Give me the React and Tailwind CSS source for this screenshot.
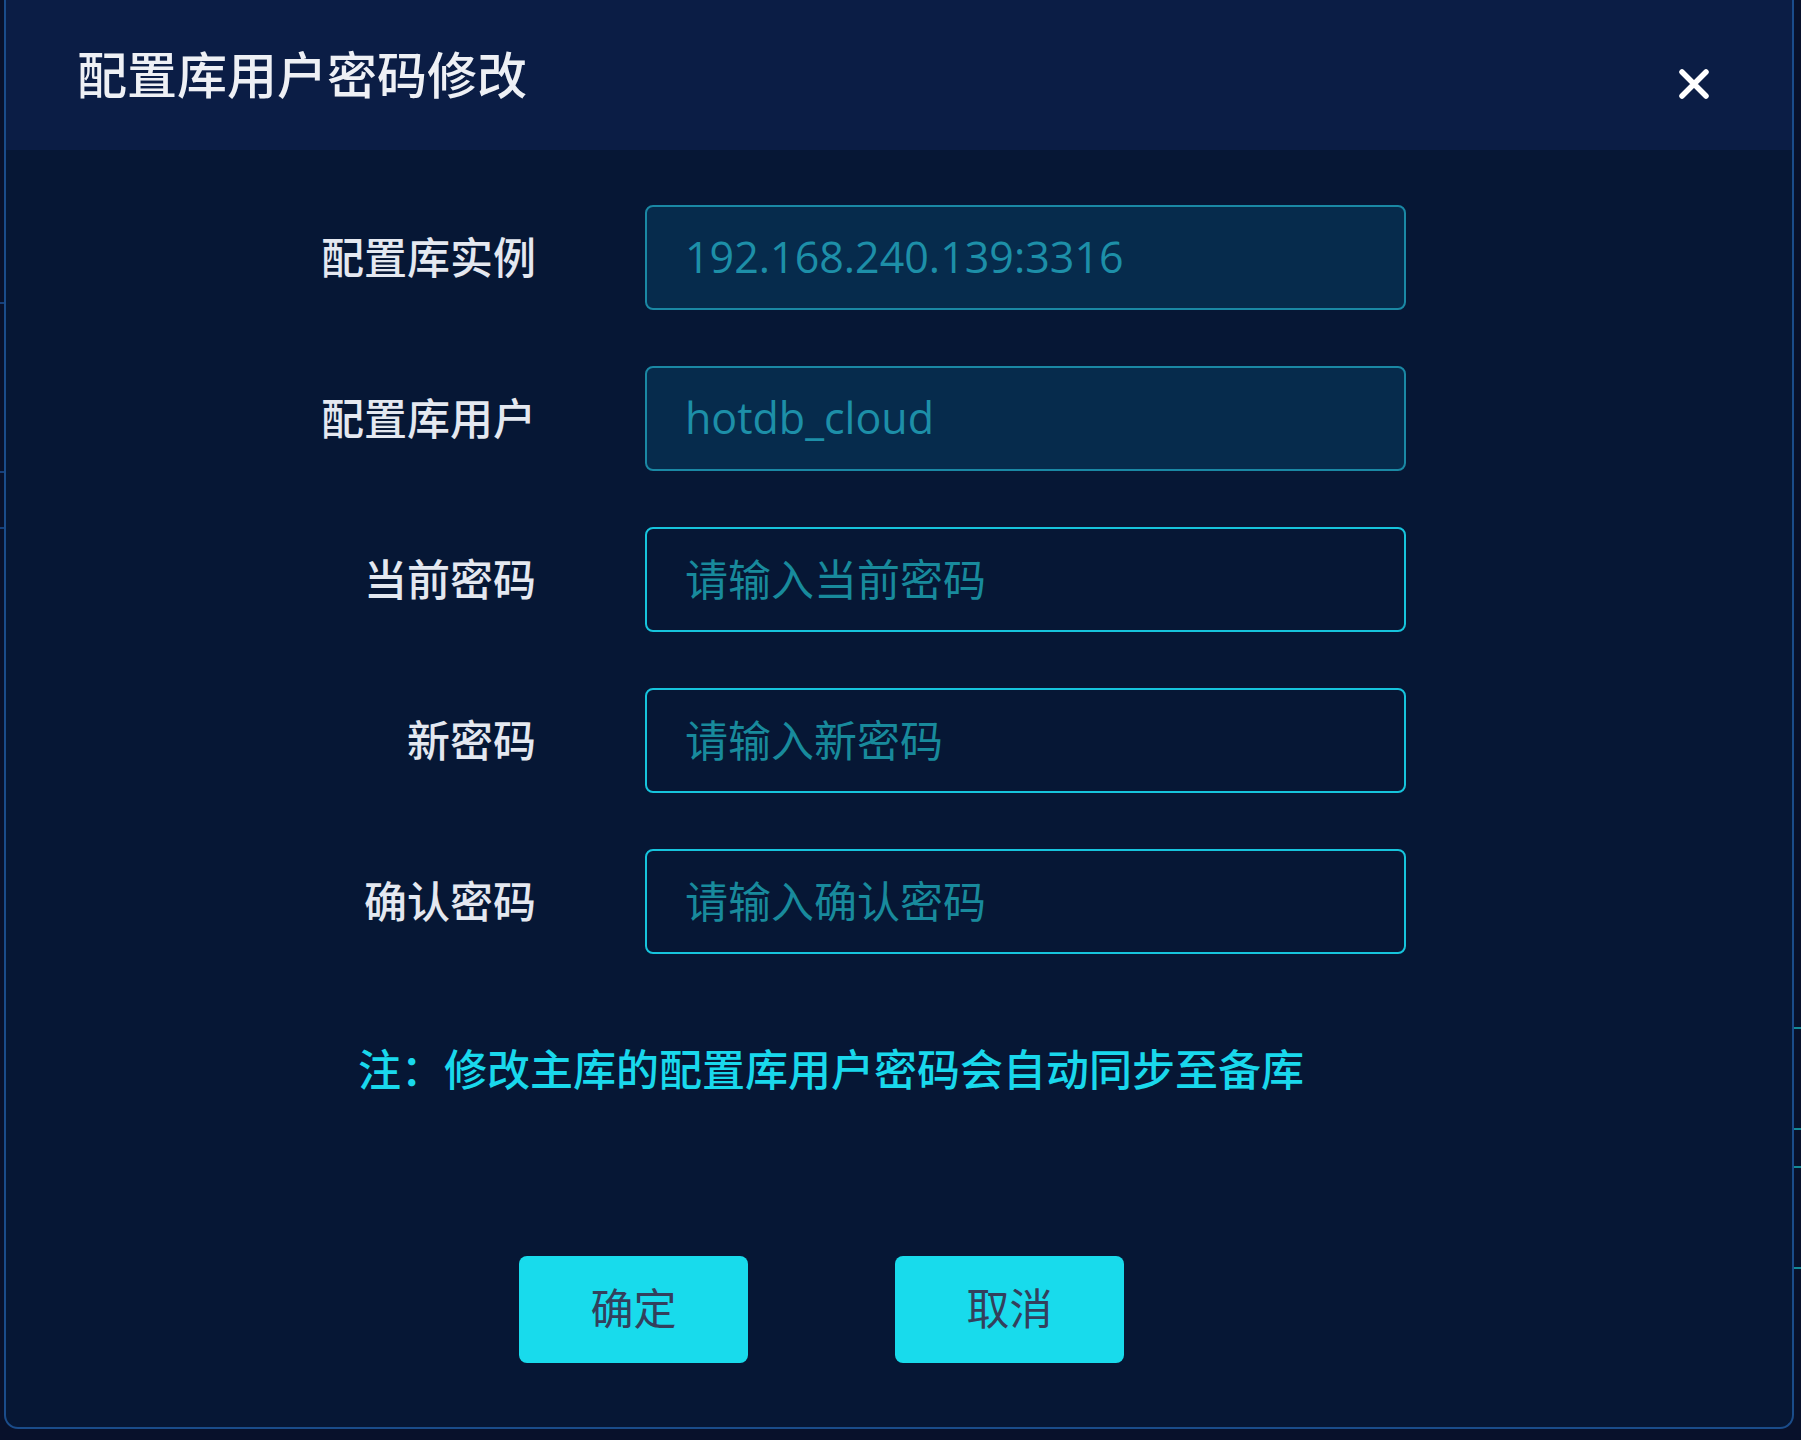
import React from "react";

const font = { fontFamily: '"Open Sans", "Noto Sans CJK SC", sans-serif' };

function Row({ label, children }) {
  return (
    <div className="flex items-center">
      <div className="w-[530px] shrink-0 text-right text-[43px] font-medium leading-none text-[#e4e8f0]">
        {label}
      </div>
      <div className="ml-[109px] w-[761px]">{children}</div>
    </div>
  );
}

function DisabledInput({ value }) {
  return (
    <div className="flex h-[105px] items-center rounded-[8px] border-2 border-[#1a88a4] bg-[#062b4c] pl-[38px] text-[43px] text-[#1d8fa8]">
      {value}
    </div>
  );
}

function PwInput({ placeholder }) {
  return (
    <input
      type="password"
      placeholder={placeholder}
      className="block h-[105px] w-full rounded-[8px] border-2 border-[#16c4dc] bg-[#061735] pl-[38px] text-[43px] text-[#1d8fa0] outline-none placeholder:text-[#188a9c]"
      style={font}
    />
  );
}

export default function App() {
  return (
    <div className="relative h-[1440px] w-full overflow-hidden bg-[#08112b]" style={font}>
      {/* background marks peeking around dialog */}
      <div className="absolute right-0 top-[1027px] h-[2px] w-[7px] bg-[#138a96]" />
      <div className="absolute right-0 top-[1128px] h-[2px] w-[7px] bg-[#138a96]" />
      <div className="absolute right-0 top-[1166px] h-[2px] w-[7px] bg-[#138a96]" />
      <div className="absolute right-0 top-[1267px] h-[2px] w-[7px] bg-[#138a96]" />
      <div className="absolute left-0 top-[302px] h-[2px] w-[4px] bg-[#17407a]" />
      <div className="absolute left-0 top-[471px] h-[2px] w-[4px] bg-[#17407a]" />
      <div className="absolute left-0 top-[527px] h-[2px] w-[4px] bg-[#17407a]" />

      <div className="ml-[4px] flex h-[1429px] w-[1790px] flex-col overflow-hidden rounded-b-[14px] border-2 border-t-0 border-[#1a4c8a] bg-[#061735]">
        {/* header */}
        <div className="flex h-[150px] shrink-0 items-center justify-between bg-[#0b1d45] pl-[71px] pr-[82px]">
          <div className="-mt-[1px] text-[50px] font-medium leading-none text-[#eef0f5]">
            配置库用户密码修改
          </div>
          <svg width="32" height="32" viewBox="0 0 32 32" className="mt-[18px]">
            <path d="M4 4 L28 28 M28 4 L4 28" stroke="#ffffff" strokeWidth="5.5" strokeLinecap="round" />
          </svg>
        </div>

        {/* body */}
        <div className="flex flex-col gap-[56px] pt-[55px]">
          <Row label="配置库实例">
            <DisabledInput value="192.168.240.139:3316" />
          </Row>
          <Row label="配置库用户">
            <DisabledInput value="hotdb_cloud" />
          </Row>
          <Row label="当前密码">
            <PwInput placeholder="请输入当前密码" />
          </Row>
          <Row label="新密码">
            <PwInput placeholder="请输入新密码" />
          </Row>
          <Row label="确认密码">
            <PwInput placeholder="请输入确认密码" />
          </Row>
        </div>

        <div className="ml-[352px] mt-[88px] text-[43px] font-medium leading-[56px] text-[#19d8ec]">
          注：修改主库的配置库用户密码会自动同步至备库
        </div>

        <div className="ml-[513px] mt-[158px] flex gap-[147px]">
          <button className="h-[107px] w-[229px] rounded-[8px] bg-[#18dbec] text-[43px] text-[#33405c]" style={font}>
            确定
          </button>
          <button className="h-[107px] w-[229px] rounded-[8px] bg-[#18dbec] text-[43px] text-[#33405c]" style={font}>
            取消
          </button>
        </div>
      </div>
    </div>
  );
}
